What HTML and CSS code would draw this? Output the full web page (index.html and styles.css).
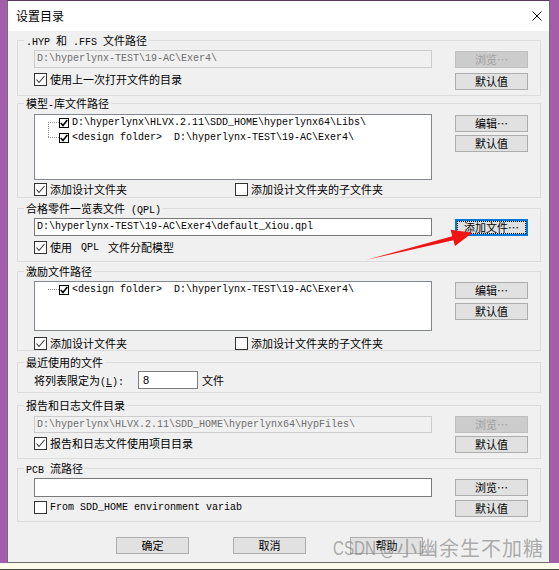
FILE: index.html
```html
<!DOCTYPE html>
<html lang="zh-CN">
<head>
<meta charset="utf-8">
<title>设置目录</title>
<link rel="stylesheet" href="styles.css">
</head>
<body>
<div class="window">
  <div class="titlebar">
    <span class="title">设置目录</span>
    <span class="close"><svg width="10" height="10" viewBox="0 0 10 10"><path d="M0.5 0.5 L9.5 9.5 M9.5 0.5 L0.5 9.5" stroke="#000" stroke-width="1"/></svg></span>
  </div>
  <div class="content">
    <div class="group g1">
      <div class="group-title"><span class="en">.HYP </span>和<span class="en"> .FFS </span>文件路径</div>
      <div class="main">
        <div class="field disabled">D:\hyperlynx-TEST\19-AC\Exer4\</div>
        <div class="check gap5"><span class="box"><svg width="11" height="11" viewBox="0 0 11 11"><polyline points="1.5,5.5 4,8.5 9.5,2" fill="none" stroke="#333" stroke-width="1.1"/></svg></span>使用上一次打开文件的目录</div>
      </div>
      <div class="side pt1 gap5">
        <div class="btn disabled">浏览…</div>
        <div class="btn">默认值</div>
      </div>
    </div>

    <div class="group g2">
      <div class="group-title">模型<span class="en">-</span>库文件路径</div>
      <div class="main">
        <div class="list tall">
          <div class="tree two">
            <div class="item"><span class="branch"></span><span class="tbox"><svg width="8" height="8" viewBox="0 0 8 8"><polyline points="0.8,4 3,6.6 7.3,1" fill="none" stroke="#000" stroke-width="1.6"/></svg></span><span class="path">D:\hyperlynx\HLVX.2.11\SDD_HOME\hyperlynx64\Libs\</span></div>
            <div class="item"><span class="branch"></span><span class="tbox"><svg width="8" height="8" viewBox="0 0 8 8"><polyline points="0.8,4 3,6.6 7.3,1" fill="none" stroke="#000" stroke-width="1.6"/></svg></span><span class="path">&lt;design folder&gt;  D:\hyperlynx-TEST\19-AC\Exer4\</span></div>
          </div>
        </div>
        <div class="check-row gap3">
          <div class="check first"><span class="box"><svg width="11" height="11" viewBox="0 0 11 11"><polyline points="1.5,5.5 4,8.5 9.5,2" fill="none" stroke="#333" stroke-width="1.1"/></svg></span>添加设计文件夹</div>
          <div class="check"><span class="box"></span>添加设计文件夹的子文件夹</div>
        </div>
      </div>
      <div class="side pt1 gap3">
        <div class="btn">编辑…</div>
        <div class="btn">默认值</div>
      </div>
    </div>

    <div class="group g3">
      <div class="group-title">合格零件一览表文件<span class="en"> (QPL)</span></div>
      <div class="main">
        <div class="field">D:\hyperlynx-TEST\19-AC\Exer4\default_Xiou.qpl</div>
        <div class="check gap5"><span class="box"><svg width="11" height="11" viewBox="0 0 11 11"><polyline points="1.5,5.5 4,8.5 9.5,2" fill="none" stroke="#333" stroke-width="1.1"/></svg></span>使用<span class="en"> QPL </span>文件分配模型</div>
      </div>
      <div class="side pt1">
        <div class="btn focus">添加文件…</div>
      </div>
    </div>

    <div class="group g4">
      <div class="group-title">激励文件路径</div>
      <div class="main">
        <div class="list short">
          <div class="tree">
            <div class="item"><span class="branch"></span><span class="tbox"><svg width="8" height="8" viewBox="0 0 8 8"><polyline points="0.8,4 3,6.6 7.3,1" fill="none" stroke="#000" stroke-width="1.6"/></svg></span><span class="path">&lt;design folder&gt;  D:\hyperlynx-TEST\19-AC\Exer4\</span></div>
          </div>
        </div>
        <div class="check-row gap6">
          <div class="check first"><span class="box"><svg width="11" height="11" viewBox="0 0 11 11"><polyline points="1.5,5.5 4,8.5 9.5,2" fill="none" stroke="#333" stroke-width="1.1"/></svg></span>添加设计文件夹</div>
          <div class="check"><span class="box"></span>添加设计文件夹的子文件夹</div>
        </div>
      </div>
      <div class="side pt1 gap4">
        <div class="btn">编辑…</div>
        <div class="btn">默认值</div>
      </div>
    </div>

    <div class="group g5">
      <div class="group-title">最近使用的文件</div>
      <div class="limit-row">
        <span class="limit-label">将列表限定为<span class="en">(<u>L</u>):</span></span>
        <div class="field small">8</div>
        <span>文件</span>
      </div>
    </div>

    <div class="group g6">
      <div class="group-title">报告和日志文件目录</div>
      <div class="main">
        <div class="field disabled h17">D:\hyperlynx\HLVX.2.11\SDD_HOME\hyperlynx64\HypFiles\</div>
        <div class="check gap4"><span class="box"><svg width="11" height="11" viewBox="0 0 11 11"><polyline points="1.5,5.5 4,8.5 9.5,2" fill="none" stroke="#333" stroke-width="1.1"/></svg></span>报告和日志文件使用项目目录</div>
      </div>
      <div class="side gap3">
        <div class="btn disabled">浏览…</div>
        <div class="btn">默认值</div>
      </div>
    </div>

    <div class="group g7">
      <div class="group-title"><span class="en">PCB </span>流路径</div>
      <div class="main">
        <div class="field h19"></div>
        <div class="check gap4"><span class="box"></span><span class="en clip">From SDD_HOME environment variable</span></div>
      </div>
      <div class="side pt1 gap4">
        <div class="btn">浏览…</div>
        <div class="btn">默认值</div>
      </div>
    </div>

    <div class="footer">
      <div class="btn">确定</div>
      <div class="btn">取消</div>
      <div class="btn">帮助</div>
    </div>
  </div>
</div>
<div class="taskbar"></div>

<svg class="arrow" width="559" height="570" viewBox="0 0 559 570">
  <polygon points="366,260 452.2,236.2 450.7,229.8 472.5,232.8 455,246 453.4,240.2" fill="#f01414"/>
</svg>
<div class="watermark"><span class="wm-en"><span>CSDN @</span></span><span class="wm-cn">小幽余生不加糖</span></div>
</body>
</html>
```
FILE: styles.css
```css
* { box-sizing: border-box; }
html, body { margin: 0; padding: 0; }
body {
  width: 559px;
  height: 570px;
  overflow: hidden;
  position: relative;
  background: #a55dab;
  font-family: "Noto Sans CJK SC", sans-serif;
  font-size: 11px;
  color: #000;
}
.en { font-family: "Liberation Mono", monospace; font-size: 10px; white-space: pre; }

.window {
  margin-left: 7px;
  width: 543px;
  height: 563px;
  background: #f0f0f0;
  border: 1px solid #6f6f6f;
  border-top-color: #5a3a5c;
}
.titlebar {
  height: 30px;
  background: #fff;
  display: flex;
  align-items: center;
  justify-content: space-between;
  padding: 0 7px 0 8px;
}
.title { font-size: 12px; line-height: 14px; }
.close { display: flex; }

.content { padding: 0 8px 0 9px; }

.group {
  position: relative;
  border: 1px solid #dcdcdc;
  display: flex;
  justify-content: space-between;
  align-items: flex-start;
  padding: 9px 12px 0 16px;
}
.group-title {
  position: absolute;
  top: -8px;
  left: 6px;
  padding: 0 2px;
  background: #f0f0f0;
  line-height: 15px;
  white-space: nowrap;
}
.g1 { margin-top: 9px; height: 56px; }
.g2 { margin-top: 7px; height: 95px; padding-top: 10px; }
.g3 { margin-top: 10px; height: 54px; }
.g4 { margin-top: 9px; height: 80px; }
.g5 { margin-top: 11px; height: 31px; padding-top: 8px; justify-content: flex-start; }
.g6 { margin-top: 12px; height: 54px; padding-top: 10px; }
.g7 { margin-top: 9px; height: 54px; }

.main { width: 398px; display: flex; flex-direction: column; }
.side { width: 73px; display: flex; flex-direction: column; }
.pt1 { padding-top: 1px; }
.side.gap3 { gap: 3px; }
.side.gap4 { gap: 4px; }
.side.gap5 { gap: 5px; }

.field {
  height: 18px;
  border: 1px solid #7a7a7a;
  background: #fff;
  padding: 0 2px;
  font-family: "Liberation Mono", monospace;
  font-size: 10px;
  line-height: 16px;
  white-space: nowrap;
  overflow: hidden;
}
.field.h17 { height: 17px; line-height: 15px; }
.field.h19 { height: 19px; }
.field.disabled { background: #f0f0f0; border-color: #cccccc; color: #6d6d6d; }
.field.small {
  width: 60px;
  font-family: "Liberation Sans", sans-serif;
  font-size: 11px;
  padding-left: 4px;
}

.check {
  display: flex;
  align-items: center;
  gap: 3px;
  height: 13px;
  line-height: 13px;
  white-space: nowrap;
}
.check.gap4 { margin-top: 4px; }
.check.gap5 { margin-top: 5px; }
.check-row { display: flex; }
.check-row.gap3 { margin-top: 3px; }
.check-row.gap6 { margin-top: 6px; }
.check.first { width: 201px; }
.box {
  width: 13px;
  height: 13px;
  flex: none;
  border: 1px solid #333;
  background: #fff;
  display: flex;
  align-items: center;
  justify-content: center;
}
.clip { display: block; width: 193px; overflow: hidden; }

.list {
  background: #fff;
  border: 1px solid #828790;
  padding-left: 13px;
}
.list.tall { height: 66px; }
.list.short { height: 50px; }
.tree { position: relative; }
.tree.two::before {
  content: "";
  position: absolute;
  left: 0;
  top: 7px;
  height: 15px;
  border-left: 1px dotted #8a8a8a;
}
.item { display: flex; align-items: center; height: 15px; }
.branch { width: 11px; height: 0; border-top: 1px dotted #8a8a8a; }
.tbox {
  width: 10px;
  height: 10px;
  border: 1px solid #000;
  background: #fff;
  display: flex;
  align-items: center;
  justify-content: center;
  margin-right: 3px;
}
.path {
  font-family: "Liberation Mono", monospace;
  font-size: 10px;
  white-space: pre;
}

.btn {
  position: relative;
  width: 73px;
  height: 17px;
  background: #e1e1e1;
  border: 1px solid #adadad;
  display: flex;
  align-items: center;
  justify-content: center;
  line-height: 13px;
  white-space: nowrap;
}
.btn.disabled { background: #cccccc; border-color: #bfbfbf; color: #a0a0a0; }
.btn.focus { border-color: #0078d7; box-shadow: inset 0 0 0 1px #0078d7; }
.btn.focus::after {
  content: "";
  position: absolute;
  inset: 1px;
  border: 1px dotted #000;
}

.limit-row { display: flex; align-items: center; height: 18px; }
.limit-label { margin-right: 14px; }
.limit-row .field.small { margin-right: 4px; }

.footer {
  display: flex;
  gap: 44px;
  padding-left: 99px;
  margin-top: 15px;
}

.taskbar {
  height: 7px;
  background: #fdfbea;
  border-bottom: 1px solid #4a4a4a;
}

.arrow { position: absolute; left: 0; top: 0; pointer-events: none; }
.watermark {
  position: absolute;
  left: 333px;
  top: 536px;
  display: flex;
  align-items: center;
  height: 24px;
  color: rgba(130, 130, 130, 0.65);
  white-space: nowrap;
  pointer-events: none;
}
.wm-en {
  display: inline-block;
  width: 64px;
  font-family: "Liberation Sans", sans-serif;
  font-size: 21px;
  line-height: 24px;
}
.wm-en span {
  display: inline-block;
  transform: scaleX(0.72);
  transform-origin: 0 50%;
}
.wm-cn {
  font-family: "Noto Sans CJK SC", sans-serif;
  font-size: 20px;
  line-height: 24px;
  letter-spacing: 1px;
}
```
